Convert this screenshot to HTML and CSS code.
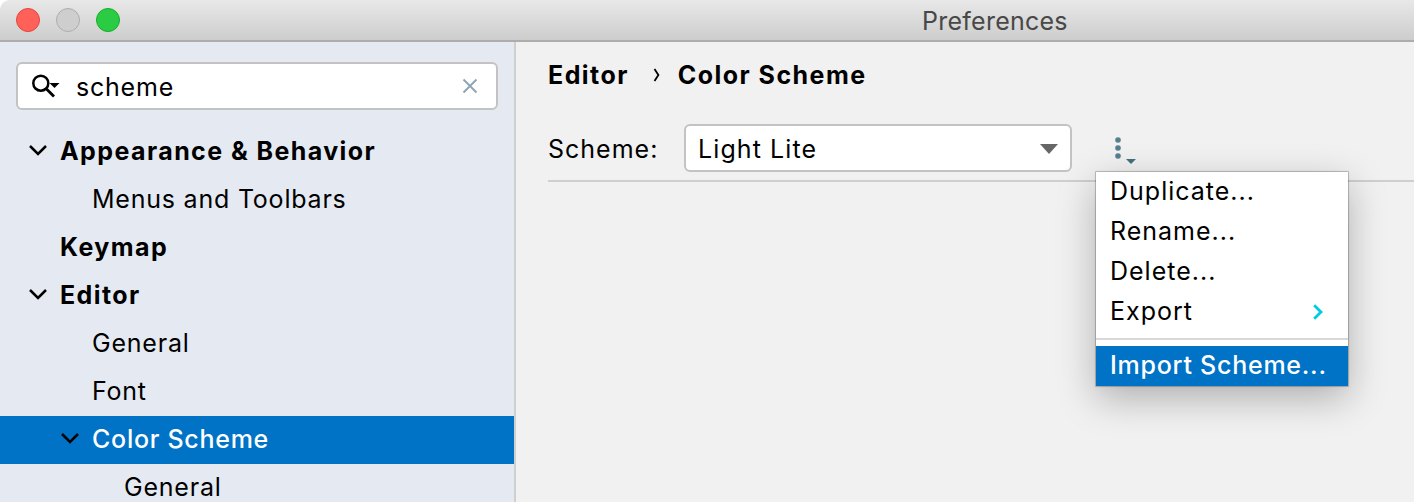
FILE: index.html
```
<!DOCTYPE html>
<html lang="en">
<head>
<meta charset="utf-8">
<title>Preferences</title>
<link rel="stylesheet" href="styles.css">
</head>
<body>
<div class="window">
  <header class="titlebar">
    <div class="lights"><span class="light close"></span><span class="light minimize"></span><span class="light zoom"></span></div>
    <h1 class="title">Preferences</h1>
  </header>
  <div class="main">
    <aside class="sidebar">
      <div class="search">
        <svg class="search-icon" width="30" height="26" viewBox="0 0 30 26"><circle cx="9.8" cy="10.2" r="7.5" fill="none" stroke="#000" stroke-width="2.5"/><path d="M15.5 16L23 23.5" stroke="#000" stroke-width="2.9"/><path d="M18.5 10H28.5L23.5 15Z"/></svg>
        <span class="query">scheme</span>
        <svg class="clear" width="16" height="16" viewBox="0 0 16 16"><path d="M1.5 1.5L14.5 14.5M14.5 1.5L1.5 14.5" stroke="#8fa5b3" stroke-width="2"/></svg>
      </div>
      <nav class="tree">
        <div class="row root"><svg class="arrow" width="18" height="12" viewBox="0 0 18 12"><path d="M1 2L9 10L17 2"/></svg><span>Appearance &amp; Behavior</span></div>
        <div class="row child"><span>Menus and Toolbars</span></div>
        <div class="row root"><span class="arrow"></span><span>Keymap</span></div>
        <div class="row root"><svg class="arrow" width="18" height="12" viewBox="0 0 18 12"><path d="M1 2L9 10L17 2"/></svg><span>Editor</span></div>
        <div class="row child"><span>General</span></div>
        <div class="row child"><span>Font</span></div>
        <div class="row selected"><svg class="arrow" width="18" height="12" viewBox="0 0 18 12"><path d="M1 2L9 10L17 2"/></svg><span>Color Scheme</span></div>
        <div class="row grandchild"><span>General</span></div>
      </nav>
    </aside>
    <main class="content">
      <div class="crumbs"><span>Editor</span><svg class="crumb-arrow" width="8" height="16" viewBox="0 0 8 16"><path d="M1.5 2L5.4 8L1.5 14" fill="none" stroke="#000" stroke-width="1.8"/></svg><span>Color Scheme</span></div>
      <div class="scheme-row">
        <span class="label">Scheme:</span>
        <div class="select"><span class="value">Light Lite</span><svg class="select-arrow" width="18" height="10" viewBox="0 0 18 10"><path d="M0 0H18L9 10Z" fill="#666"/></svg></div>
        <div class="actions">
          <svg width="24" height="28" viewBox="0 0 24 28"><g fill="#587f8e"><circle cx="4" cy="3" r="2.8"/><circle cx="4" cy="11" r="2.8"/><circle cx="4" cy="19" r="2.8"/></g><path d="M12 22H22L17 27Z" fill="#476f7d"/></svg>
          <div class="menu">
            <div class="item"><span>Duplicate...</span></div>
            <div class="item"><span>Rename...</span></div>
            <div class="item"><span>Delete...</span></div>
            <div class="item"><span>Export</span><svg width="10" height="16" viewBox="0 0 10 16"><path d="M1.2 1.2L8 8L1.2 14.8" fill="none" stroke="#00cce0" stroke-width="2.8"/></svg></div>
            <div class="separator"></div>
            <div class="item active"><span>Import Scheme...</span></div>
          </div>
        </div>
      </div>
    </main>
  </div>
</div>
</body>
</html>
```
FILE: styles.css
```
* { box-sizing: border-box; }
body { margin: 0; background: #fff; font-family: Inter, "Liberation Sans", sans-serif; font-size: 25px; letter-spacing: .78px; color: #000; overflow: hidden; }
.window { width: 1414px; height: 502px; display: flex; flex-direction: column; overflow: hidden; border-top-left-radius: 10px; background: #f1f1f1; white-space: nowrap; }
.titlebar { height: 42px; flex: none; display: grid; grid-template-columns: 922px auto; align-items: center; background: linear-gradient(#e8e8e8, #cdcdcd); border-bottom: 2px solid #adadad; }
.lights { display: flex; gap: 16px; padding-left: 16px; }
.light { width: 24px; height: 24px; border-radius: 50%; border: 1px solid; }
.close { background: #ff6159; border-color: #e2463f; }
.minimize { background: #cecece; border-color: #adadad; }
.zoom { background: #29cc42; border-color: #1aab29; }
.title { margin: 0; padding-top: 2px; font-size: 25px; font-weight: 400; letter-spacing: .25px; color: #484848; }
.main { flex: 1; display: flex; min-height: 0; }
.sidebar { width: 516px; flex: none; background: #e5eaf2; border-right: 2px solid #cfcfcf; padding-top: 20px; }
.search { width: 482px; height: 48px; margin-left: 16px; border: 2px solid #c3c3c3; border-radius: 6px; background: #fff; display: flex; align-items: center; padding: 0 18px 0 13px; }
.search-icon { flex: none; }
.query { flex: 1; margin-left: 15px; padding-top: 2px; }
.tree { margin-top: 18px; }
.row { height: 48px; padding-bottom: 2px; display: flex; align-items: center; }
.root { padding-left: 29px; font-weight: 700; letter-spacing: 1.42px; }
.child { padding-left: 92px; }
.grandchild { padding-left: 124px; }
.selected { padding-left: 61px; background: #0073c7; color: #fff; font-weight: 500; letter-spacing: .72px; }
.arrow { width: 18px; margin: 0 13px 2px 0; fill: none; stroke: #000; stroke-width: 2.5; }
.content { flex: 1; padding: 9px 0 0 32px; }
.crumbs { height: 48px; display: flex; align-items: center; font-weight: 700; letter-spacing: 1.45px; }
.crumb-arrow { margin: 0 17px 0 24px; }
.scheme-row { height: 83px; padding-top: 25px; display: flex; align-items: flex-start; border-bottom: 2px solid #cfcfcf; letter-spacing: 1px; }
.label { width: 136px; line-height: 50px; }
.select { width: 388px; height: 48px; border: 2px solid #c3c3c3; border-radius: 6px; background: #fff; display: flex; align-items: center; justify-content: space-between; padding: 0 12px; }
.select-arrow { margin-top: 2px; }
.value { padding-top: 2px; letter-spacing: 1.1px; }
.actions { position: relative; margin: 13px 0 0 42px; }
.menu { position: absolute; left: -18px; top: 35px; width: 252px; background: #fff; box-shadow: 0 0 0 1px rgba(0,0,0,.15), 0 0 2px rgba(0,0,0,.25), 0 12px 36px rgba(0,0,0,.28); }
.item { height: 40px; display: flex; align-items: center; justify-content: space-between; padding: 0 25px 0 14px; }
.item span { padding-bottom: 2px; }
.separator { height: 14px; padding: 6px 0; }
.separator::before { content: ""; display: block; height: 2px; background: #d8d8d8; }
.active { background: #0073c7; color: #fff; font-weight: 500; letter-spacing: .75px; }
```
